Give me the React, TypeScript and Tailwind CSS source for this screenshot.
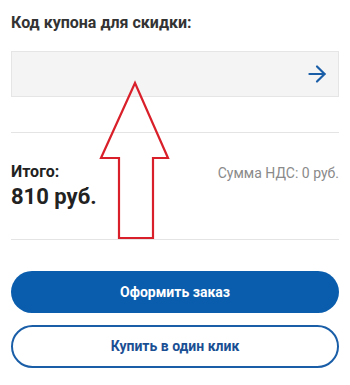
import { ArrowRight } from "lucide-react";

export default function App() {
  return (
    <div className="relative w-[350px] h-[385px] bg-white font-['Roboto',sans-serif]">
      <div className="px-[11px] pt-[12px]">
        {/* Coupon */}
        <div className="text-[16px] leading-[21px] font-bold text-[#333]">
          Код купона для скидки:
        </div>
        <div className="mt-[18px] h-[46px] bg-[#f4f4f4] border border-[#e5e5e5] flex items-center justify-end pr-[8px]">
          <ArrowRight className="w-[26px] h-[26px] text-[#1a5ea8]" strokeWidth={2} />
        </div>
        <div className="mt-[35px] h-px bg-[#e4e4e4]" />

        {/* Total */}
        <div className="pt-[29px] flex justify-between items-start">
          <div>
            <div className="text-[16px] leading-[19px] font-bold text-[#222]">Итого:</div>
            <div className="mt-[3px] text-[22px] leading-[26px] font-bold text-[#222]">810 руб.</div>
          </div>
          <div className="text-[14px] leading-[18px] text-[#8a8a8a] pt-[2px]">Сумма НДС: 0 руб.</div>
        </div>
        <div className="mt-[29px] h-px bg-[#e4e4e4]" />

        {/* Actions */}
        <div className="mt-[31px] flex flex-col gap-[12px]">
          <button className="h-[42px] rounded-full bg-[#0a5dad] text-white text-[14px] font-bold">
            Оформить заказ
          </button>
          <button className="h-[43px] rounded-full border-2 border-[#1a5ea8] text-[#1a4f94] text-[14px] font-bold">
            Купить в один клик
          </button>
        </div>
      </div>

      {/* Annotation arrow */}
      <svg className="absolute left-0 top-0 pointer-events-none" width="350" height="385">
        <path
          d="M135 83 L168 158 L153 158 L153 238 L119 238 L119 158 L101 158 Z"
          fill="none"
          stroke="#d9202a"
          strokeWidth="2.2"
          strokeLinejoin="miter"
        />
      </svg>
    </div>
  );
}
